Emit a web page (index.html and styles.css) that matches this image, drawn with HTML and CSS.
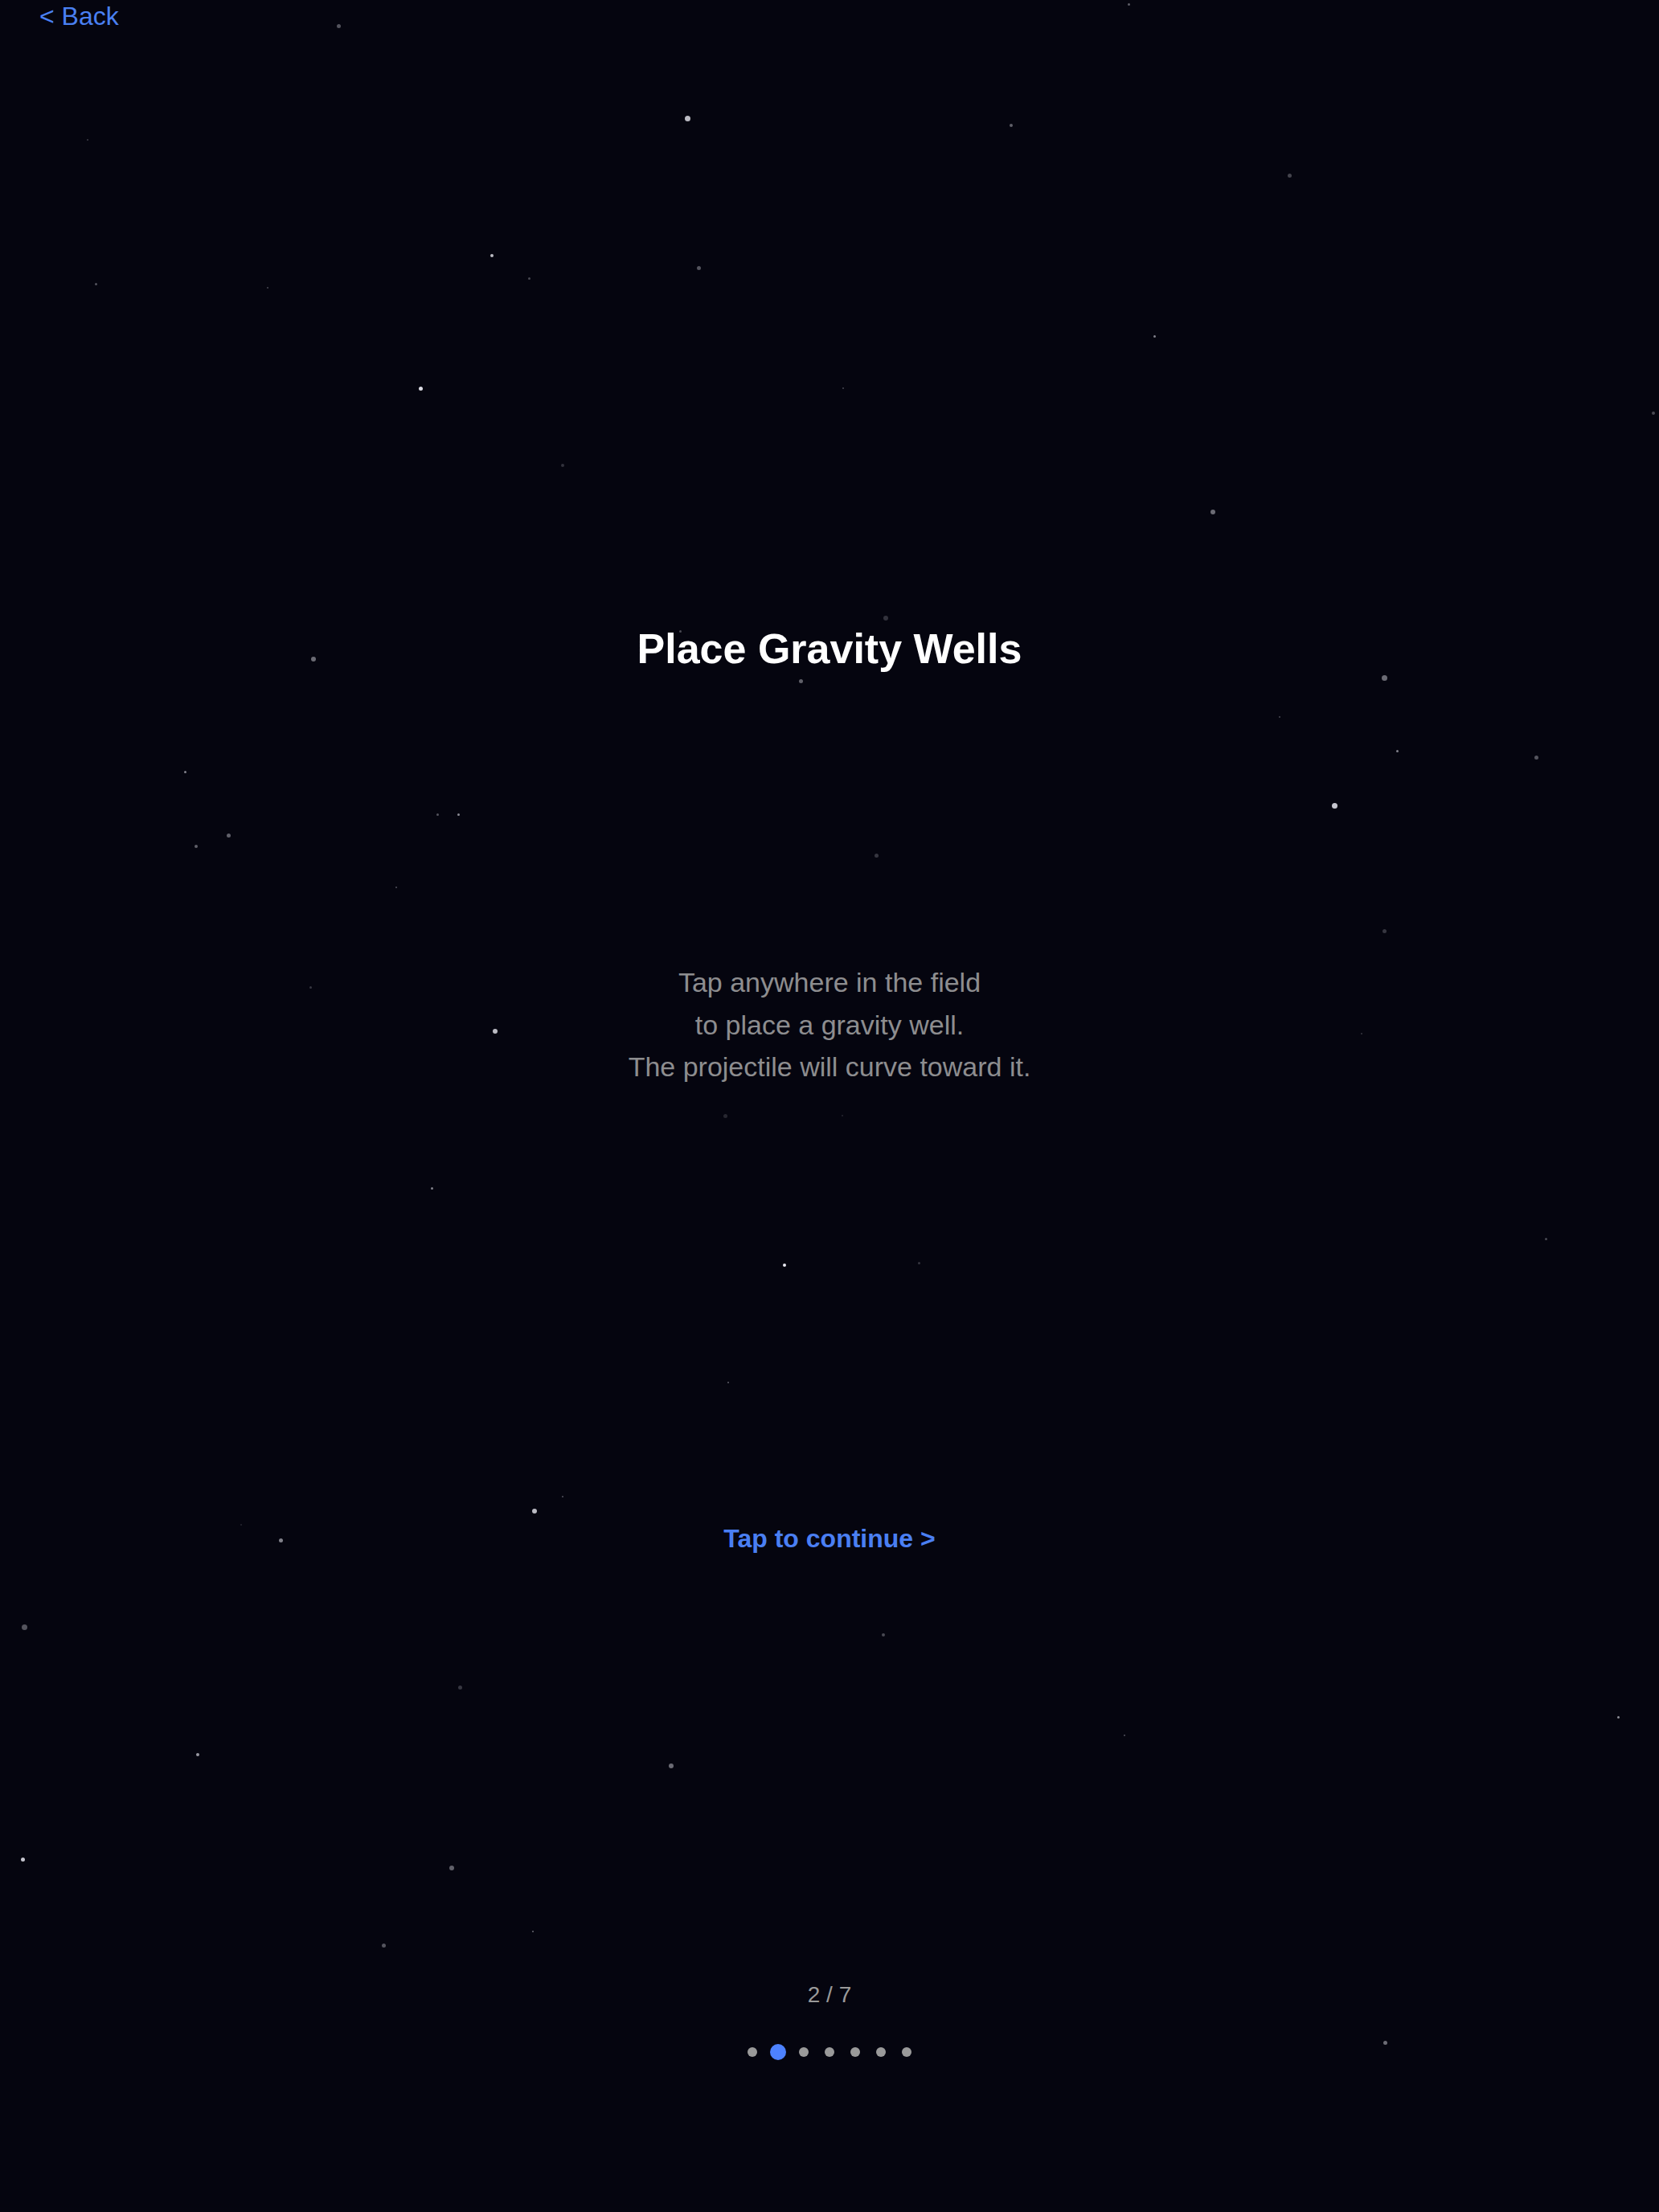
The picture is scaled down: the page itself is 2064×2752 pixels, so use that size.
FILE: index.html
```html
<!DOCTYPE html>
<html lang="en">
<head>
<meta charset="utf-8">
<title>Place Gravity Wells</title>
<link rel="stylesheet" href="styles.css">
</head>
<body>
<div class="screen">
  <!-- starfield backdrop: each star carries its own position, size and brightness -->
  <div class="stars" aria-hidden="true">
    <i class="star" style="--x:421px;--y:32px;--s:5px;--o:.35"></i>
    <i class="star" style="--x:1404px;--y:5px;--s:3px;--o:.4"></i>
    <i class="star" style="--x:855px;--y:147px;--s:7px;--o:.8"></i>
    <i class="star" style="--x:1258px;--y:156px;--s:4px;--o:.4"></i>
    <i class="star" style="--x:1604px;--y:218px;--s:5px;--o:.28"></i>
    <i class="star" style="--x:109px;--y:174px;--s:2px;--o:.25"></i>
    <i class="star" style="--x:612px;--y:318px;--s:4px;--o:.8"></i>
    <i class="star" style="--x:658px;--y:346px;--s:3px;--o:.3"></i>
    <i class="star" style="--x:869px;--y:333px;--s:5px;--o:.35"></i>
    <i class="star" style="--x:119px;--y:353px;--s:3px;--o:.35"></i>
    <i class="star" style="--x:333px;--y:358px;--s:2px;--o:.3"></i>
    <i class="star" style="--x:1436px;--y:418px;--s:3px;--o:.55"></i>
    <i class="star" style="--x:523px;--y:483px;--s:5px;--o:.95"></i>
    <i class="star" style="--x:1049px;--y:483px;--s:2px;--o:.3"></i>
    <i class="star" style="--x:2057px;--y:514px;--s:4px;--o:.3"></i>
    <i class="star" style="--x:700px;--y:579px;--s:4px;--o:.2"></i>
    <i class="star" style="--x:1509px;--y:637px;--s:6px;--o:.45"></i>
    <i class="star" style="--x:1102px;--y:769px;--s:6px;--o:.2"></i>
    <i class="star" style="--x:846px;--y:785px;--s:3px;--o:.3"></i>
    <i class="star" style="--x:390px;--y:820px;--s:6px;--o:.45"></i>
    <i class="star" style="--x:996px;--y:847px;--s:5px;--o:.4"></i>
    <i class="star" style="--x:1722px;--y:843px;--s:7px;--o:.45"></i>
    <i class="star" style="--x:1592px;--y:892px;--s:2px;--o:.3"></i>
    <i class="star" style="--x:1738px;--y:934px;--s:3px;--o:.55"></i>
    <i class="star" style="--x:1911px;--y:942px;--s:5px;--o:.35"></i>
    <i class="star" style="--x:230px;--y:960px;--s:3px;--o:.55"></i>
    <i class="star" style="--x:544px;--y:1013px;--s:3px;--o:.35"></i>
    <i class="star" style="--x:570px;--y:1013px;--s:3px;--o:.6"></i>
    <i class="star" style="--x:284px;--y:1039px;--s:5px;--o:.4"></i>
    <i class="star" style="--x:244px;--y:1053px;--s:4px;--o:.4"></i>
    <i class="star" style="--x:1660px;--y:1002px;--s:7px;--o:.85"></i>
    <i class="star" style="--x:1090px;--y:1064px;--s:5px;--o:.22"></i>
    <i class="star" style="--x:493px;--y:1104px;--s:2px;--o:.35"></i>
    <i class="star" style="--x:1722px;--y:1158px;--s:5px;--o:.22"></i>
    <i class="star" style="--x:386px;--y:1228px;--s:3px;--o:.22"></i>
    <i class="star" style="--x:616px;--y:1283px;--s:6px;--o:.8"></i>
    <i class="star" style="--x:1694px;--y:1286px;--s:2px;--o:.22"></i>
    <i class="star" style="--x:902px;--y:1388px;--s:5px;--o:.15"></i>
    <i class="star" style="--x:1048px;--y:1388px;--s:2px;--o:.15"></i>
    <i class="star" style="--x:537px;--y:1478px;--s:3px;--o:.55"></i>
    <i class="star" style="--x:976px;--y:1574px;--s:4px;--o:1"></i>
    <i class="star" style="--x:1143px;--y:1571px;--s:3px;--o:.22"></i>
    <i class="star" style="--x:1923px;--y:1541px;--s:3px;--o:.3"></i>
    <i class="star" style="--x:906px;--y:1720px;--s:2px;--o:.4"></i>
    <i class="star" style="--x:700px;--y:1862px;--s:2px;--o:.35"></i>
    <i class="star" style="--x:665px;--y:1880px;--s:6px;--o:.8"></i>
    <i class="star" style="--x:300px;--y:1897px;--s:2px;--o:.15"></i>
    <i class="star" style="--x:349px;--y:1916px;--s:5px;--o:.55"></i>
    <i class="star" style="--x:30px;--y:2024px;--s:7px;--o:.35"></i>
    <i class="star" style="--x:1099px;--y:2034px;--s:4px;--o:.3"></i>
    <i class="star" style="--x:572px;--y:2099px;--s:5px;--o:.22"></i>
    <i class="star" style="--x:1399px;--y:2159px;--s:2px;--o:.35"></i>
    <i class="star" style="--x:2013px;--y:2136px;--s:3px;--o:.6"></i>
    <i class="star" style="--x:246px;--y:2183px;--s:4px;--o:.65"></i>
    <i class="star" style="--x:835px;--y:2197px;--s:6px;--o:.45"></i>
    <i class="star" style="--x:28px;--y:2313px;--s:5px;--o:.85"></i>
    <i class="star" style="--x:562px;--y:2324px;--s:6px;--o:.4"></i>
    <i class="star" style="--x:663px;--y:2403px;--s:2px;--o:.45"></i>
    <i class="star" style="--x:477px;--y:2420px;--s:5px;--o:.35"></i>
    <i class="star" style="--x:1723px;--y:2541px;--s:5px;--o:.45"></i>
  </div>

  <header class="topbar">
    <a class="back" href="#">&lt; Back</a>
  </header>

  <main class="slide">
    <h1 class="title">Place Gravity Wells</h1>
    <p class="body">Tap anywhere in the field<br>to place a gravity well.<br>The projectile will curve toward it.</p>
    <a class="continue" href="#">Tap to continue &gt;</a>
  </main>

  <footer class="pager">
    <div class="count">2 / 7</div>
    <div class="dots">
      <span class="dot"></span>
      <span class="dot active"></span>
      <span class="dot"></span>
      <span class="dot"></span>
      <span class="dot"></span>
      <span class="dot"></span>
      <span class="dot"></span>
    </div>
  </footer>
</div>
</body>
</html>
```

FILE: styles.css
```css
html, body {
  margin: 0;
  padding: 0;
  background: #05050f;
}

.screen {
  position: relative;
  min-height: 2752px;
  display: flex;
  flex-direction: column;
  font-family: "Liberation Sans", Arial, Helvetica, sans-serif;
  overflow: hidden;
}

/* starfield */
.stars {
  position: absolute;
  inset: 0;
  pointer-events: none;
}

.star {
  position: absolute;
  left: var(--x);
  top: var(--y);
  width: var(--s);
  height: var(--s);
  margin: calc(var(--s) / -2) 0 0 calc(var(--s) / -2);
  border-radius: 50%;
  background: #e8e8f0;
  opacity: var(--o);
}

/* top bar */
.topbar {
  position: relative;
  padding: 2px 0 0 49px;
}

.back {
  display: inline-block;
  font-size: 32px;
  line-height: 37px;
  color: #4a80f2;
  text-decoration: none;
}

/* slide content */
.slide {
  position: relative;
  display: flex;
  flex-direction: column;
  align-items: center;
  text-align: center;
}

.title {
  margin: 737px 0 0;
  font-size: 52px;
  line-height: 62px;
  font-weight: 700;
  color: #ffffff;
}

.body {
  margin: 358px 0 0;
  font-size: 34px;
  line-height: 52.5px;
  color: #8d8d8f;
}

.continue {
  margin-top: 540px;
  font-size: 32px;
  line-height: 40px;
  font-weight: 700;
  color: #4a7ff3;
  text-decoration: none;
}

/* pager */
.pager {
  position: relative;
  display: flex;
  flex-direction: column;
  align-items: center;
}

.count {
  margin-top: 532px;
  font-size: 28px;
  line-height: 32px;
  color: #9a9a9a;
}

.dots {
  margin-top: 45px;
  display: grid;
  grid-template-columns: repeat(7, 32px);
  height: 20px;
  align-items: center;
  justify-items: center;
}

.dot {
  width: 12px;
  height: 12px;
  border-radius: 50%;
  background: #9a9a9a;
}

.dot.active {
  width: 20px;
  height: 20px;
  background: #4d82ff;
}
```
